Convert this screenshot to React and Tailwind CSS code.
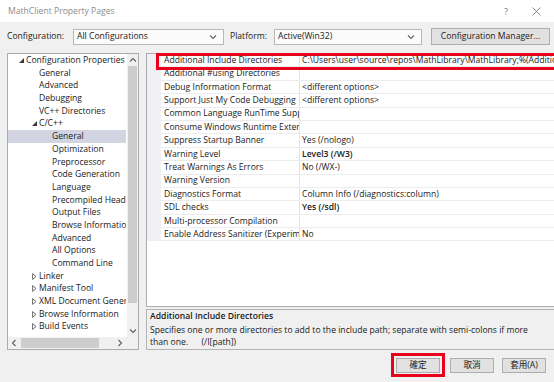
import React from "react";

const treeItems = [
  { level: 0, state: "open", label: "Configuration Properties" },
  { level: 1, label: "General" },
  { level: 1, label: "Advanced" },
  { level: 1, label: "Debugging" },
  { level: 1, label: "VC++ Directories" },
  { level: 1, state: "open", label: "C/C++" },
  { level: 2, label: "General", selected: true },
  { level: 2, label: "Optimization" },
  { level: 2, label: "Preprocessor" },
  { level: 2, label: "Code Generation" },
  { level: 2, label: "Language" },
  { level: 2, label: "Precompiled Headers" },
  { level: 2, label: "Output Files" },
  { level: 2, label: "Browse Information" },
  { level: 2, label: "Advanced" },
  { level: 2, label: "All Options" },
  { level: 2, label: "Command Line" },
  { level: 1, state: "closed", label: "Linker" },
  { level: 1, state: "closed", label: "Manifest Tool" },
  { level: 1, state: "closed", label: "XML Document Generator" },
  { level: 1, state: "closed", label: "Browse Information" },
  { level: 1, state: "closed", label: "Build Events" },
];

const indent = { 0: "pl-[10px]", 1: "pl-[23px]", 2: "pl-[36px]" };

const props = [
  { name: "Additional Include Directories", value: "C:\\Users\\user\\source\\repos\\MathLibrary\\MathLibrary;%(AdditionalIncludeDirectories)" },
  { name: "Additional #using Directories", value: "" },
  { name: "Debug Information Format", value: "<different options>" },
  { name: "Support Just My Code Debugging", value: "<different options>" },
  { name: "Common Language RunTime Support", value: "" },
  { name: "Consume Windows Runtime Extension", value: "" },
  { name: "Suppress Startup Banner", value: "Yes (/nologo)" },
  { name: "Warning Level", value: "Level3 (/W3)", bold: true },
  { name: "Treat Warnings As Errors", value: "No (/WX-)" },
  { name: "Warning Version", value: "" },
  { name: "Diagnostics Format", value: "Column Info (/diagnostics:column)" },
  { name: "SDL checks", value: "Yes (/sdl)", bold: true },
  { name: "Multi-processor Compilation", value: "" },
  { name: "Enable Address Sanitizer (Experimental Feature)", value: "No" },
];

function Chevron({ dir = "down", className = "" }) {
  const pts = {
    down: "1,1.5 4,4.5 7,1.5",
    up: "1,4.5 4,1.5 7,4.5",
  };
  if (dir === "left" || dir === "right") {
    return (
      <svg width="6" height="8" viewBox="0 0 6 8" className={className}>
        <polyline
          points={dir === "left" ? "4.5,1 1.5,4 4.5,7" : "1.5,1 4.5,4 1.5,7"}
          fill="none"
          stroke="#606060"
          strokeWidth="1.1"
        />
      </svg>
    );
  }
  return (
    <svg width="8" height="6" viewBox="0 0 8 6" className={className}>
      <polyline points={pts[dir]} fill="none" stroke="#606060" strokeWidth="1.1" />
    </svg>
  );
}

function Expander({ state }) {
  if (state === "open") {
    return (
      <svg width="5" height="5" viewBox="0 0 5 5" className="ml-[1px]">
        <polygon points="5,0 5,5 0,5" fill="#3c3c3c" />
      </svg>
    );
  }
  if (state === "closed") {
    return (
      <svg width="5" height="7" viewBox="0 0 5 7" className="ml-[1px]">
        <polygon points="0.6,0.6 4,3.5 0.6,6.4" fill="none" stroke="#5a5a5a" strokeWidth="0.9" />
      </svg>
    );
  }
  return null;
}

function Combo({ text, width }) {
  return (
    <div className={`${width} h-[16px] bg-[#fbfbfb] border border-[#b9b9b9] flex items-center justify-between pl-[3px] pr-[6px]`}>
      <span>{text}</span>
      <Chevron dir="down" />
    </div>
  );
}

export default function App() {
  return (
    <div className="w-[554px] h-[382px] bg-[#f0f0f0] flex flex-col overflow-hidden text-[8.6px] leading-none text-[#1a1a1a] font-['Open_Sans','Noto_Sans_CJK_TC',sans-serif]">
      {/* title bar */}
      <div className="h-[22px] bg-white flex items-center pl-[8px] shrink-0">
        <span className="text-[#8c8c8c] flex-1">MathClient Property Pages</span>
        <span className="text-[#7a7a7a] text-[9px] mr-[24px]">?</span>
        <svg width="9" height="9" viewBox="0 0 9 9" className="mr-[13px]">
          <path d="M0.5,0.5 L8.5,8.5 M8.5,0.5 L0.5,8.5" stroke="#7a7a7a" strokeWidth="0.9" />
        </svg>
      </div>

      {/* configuration row */}
      <div className="mt-[6px] h-[17px] flex items-center pl-[7px] shrink-0">
        <span className="w-[66px]">Configuration:</span>
        <Combo text="All Configurations" width="w-[151px]" />
        <span className="ml-[6px] w-[44px]">Platform:</span>
        <Combo text="Active(Win32)" width="w-[148px]" />
        <div className="ml-[9px] w-[119px] h-[17px] bg-[#e1e1e1] border border-[#adadad] flex items-center justify-center">
          Configuration Manager...
        </div>
      </div>

      {/* main area */}
      <div className="mt-[8px] h-[297px] flex px-[7px] gap-[7px] shrink-0">
        {/* tree */}
        <div className="w-[132px] border border-[#acacac] bg-white flex flex-col">
          <div className="flex flex-1 min-h-0">
            <div className="w-[118px] overflow-hidden">
              {treeItems.map((it, i) => (
                <div
                  key={i}
                  className={`h-[12.7px] flex items-center whitespace-nowrap ${indent[it.level]} ${it.selected ? "bg-[#d2d5e1]" : ""}`}
                >
                  <div className="w-[8px] shrink-0 flex items-center">
                    <Expander state={it.state} />
                  </div>
                  <span>{it.label}</span>
                </div>
              ))}
            </div>
            <div className="w-[11px] ml-[1px] bg-[#f0f0f0] flex flex-col">
              <div className="h-[12px] flex items-center justify-center">
                <Chevron dir="up" />
              </div>
              <div className="h-[237px] mx-[1px] bg-[#cdcdcd]" />
              <div className="flex-1" />
              <div className="h-[12px] flex items-center justify-center">
                <Chevron dir="down" />
              </div>
            </div>
          </div>
          <div className="h-[12px] flex bg-[#f0f0f0]">
            <div className="w-[12px] flex items-center justify-center">
              <Chevron dir="left" />
            </div>
            <div className="w-[78px] ml-[1px] my-[1px] bg-[#cdcdcd]" />
            <div className="flex-1" />
            <div className="w-[12px] flex items-center justify-center">
              <Chevron dir="right" />
            </div>
            <div className="w-[12px] bg-[#f0f0f0]" />
          </div>
        </div>

        {/* right column */}
        <div className="flex-1 flex flex-col">
          <div className="relative h-[254px] border border-[#acacac] bg-white">
            {props.map((p, i) => (
              <div key={i} className="h-[13.4px] flex">
                <div className="w-[14px] shrink-0 bg-[#eef0f4]" />
                <div className="flex-1 flex border-b border-[#ececec]">
                  <div className="w-[139px] shrink-0 overflow-hidden whitespace-nowrap pl-[3px] flex items-center border-r border-[#e4e4e4]">
                    {p.name}
                  </div>
                  <div className={`flex-1 overflow-hidden whitespace-nowrap pl-[2px] flex items-center ${p.bold ? "font-semibold" : ""}`}>
                    {p.value}
                  </div>
                </div>
              </div>
            ))}
            <div className="absolute left-[9px] top-[-1px] right-[-1px] h-[17px] border-[3px] border-[#e8001c]" />
          </div>
          <div className="mt-[2px] flex-1 border border-[#b4b4b4] bg-[#f0f0f0] px-[3px] whitespace-nowrap">
            <div className="h-[12px] flex items-center font-semibold">Additional Include Directories</div>
            <div className="mt-[2px] h-[12px] flex items-center">
              Specifies one or more directories to add to the include path; separate with semi-colons if more
            </div>
            <div className="h-[12px] flex items-center whitespace-pre">than one.      (/I[path])</div>
          </div>
        </div>
      </div>

      {/* buttons */}
      <div className="mt-[3px] flex items-center justify-end pr-[8px]">
        <div className="border-[3px] border-[#e8001c] px-[2px] py-[1.5px]">
          <div className="w-[44px] h-[15px] bg-[#e1e1e1] border border-[#adadad] flex items-center justify-center">確定</div>
        </div>
        <div className="ml-[5px] w-[44px] h-[15px] bg-[#e1e1e1] border border-[#adadad] flex items-center justify-center">取消</div>
        <div className="ml-[8px] w-[44px] h-[15px] bg-[#e1e1e1] border border-[#adadad] flex items-center justify-center">套用(A)</div>
      </div>
    </div>
  );
}
